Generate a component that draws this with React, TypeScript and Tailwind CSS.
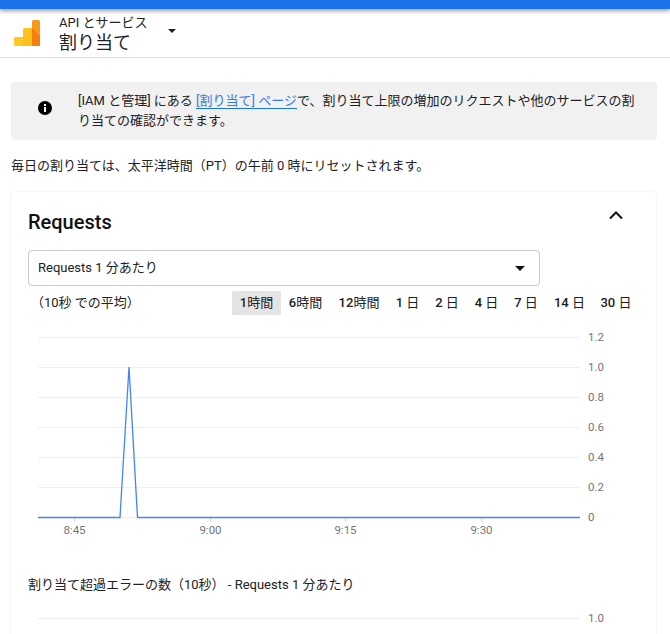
import React from "react";

const ranges = [
  { n: "1", u: "時間", w: "w-[49px]", a: true },
  { n: "6", u: "時間", w: "w-[49px]" },
  { n: "12", u: "時間", w: "w-[58px]" },
  { n: "1 ", u: "日", w: "w-[39px]" },
  { n: "2 ", u: "日", w: "w-[40px]" },
  { n: "4 ", u: "日", w: "w-[39px]" },
  { n: "7 ", u: "日", w: "w-[40px]" },
  { n: "14 ", u: "日", w: "w-[47px]" },
  { n: "30 ", u: "日", w: "w-[46px]" },
];

const ys: [number, string][] = [
  [337, "1.2"],
  [367, "1.0"],
  [397, "0.8"],
  [427, "0.6"],
  [457, "0.4"],
  [487, "0.2"],
  [517, "0"],
];
const xs: [number, string][] = [
  [74, "8:45"],
  [210, "9:00"],
  [345, "9:15"],
  [481, "9:30"],
];

export default function App() {
  return (
    <div className="relative h-[634px] w-[670px] overflow-hidden bg-white text-[13px] text-[#202124] font-['Roboto','Noto_Sans_CJK_JP',sans-serif]">
      <div className="relative z-10 h-[9px] bg-[#1a73e8] shadow-[0_2px_4px_rgba(0,0,0,0.4)]" />
      <header className="flex h-[49px] items-center border-b border-[#dfe0e1] pl-[14px]">
        <svg width="26" height="26" viewBox="0 0 26 26" className="shrink-0">
          <path d="M0 18.500A1.500 1.500 0 0 1 1.500 17H9v9H1.500A1.500 1.500 0 0 1 0 24.500z" fill="#ffc824" />
          <path d="M9 9.500A1.500 1.500 0 0 1 10.500 8H18v18H9z" fill="#ffbf1c" />
          <path d="M18 1.500A1.500 1.500 0 0 1 19.500 0h5A1.500 1.500 0 0 1 26 1.500V24.500A1.500 1.500 0 0 1 24.500 26H18z" fill="#f9981f" />
          <path d="M18 8l8 8v8.500A1.500 1.500 0 0 1 24.500 26H18z" fill="#f57f0c" />
        </svg>
        <div className="ml-[19px] mt-[3px] flex flex-col">
          <span className="text-[13px] leading-[16px]">API とサービス</span>
          <span className="text-[18px] leading-[23px]">割り当て</span>
        </div>
        <svg width="8" height="4" viewBox="0 0 8 4" className="ml-[21px] mb-[5px]">
          <path d="M0 0h8L4 4z" fill="#202124" />
        </svg>
      </header>

      <main className="px-[11px]">
        <div className="mt-[24px] flex h-[58px] w-[646px] rounded-[4px] bg-[#f1f1f1]">
          <div className="flex w-[67px] shrink-0 items-center justify-center pb-[6px]">
            <svg width="16" height="16" viewBox="0 0 16 16">
              <circle cx="8" cy="8" r="7" fill="#000" />
              <rect x="7" y="7" width="2" height="5" fill="#fff" />
              <rect x="7" y="4" width="2" height="2" fill="#fff" />
            </svg>
          </div>
          <p className="pt-[9px] pr-[20px] leading-[20px]">
            [IAM と管理] にある <a className="border-b border-[#1a73e8] text-[#3b78e7]">[割り当て] ページ</a>で、割り当て上限の増加のリクエストや他のサービスの割り当ての確認ができます。
          </p>
        </div>

        <p className="mt-[16px] leading-[20px]">毎日の割り当ては、太平洋時間（PT）の午前 0 時にリセットされます。</p>

        <section className="mt-[16px] h-[500px] w-[645px] rounded-[4px] shadow-[0_0_2px_rgba(60,64,67,0.16)]">
          <div className="flex items-center justify-between pl-[17px] pr-[32px] pt-[14px]">
            <h2 className="text-[20px] font-medium leading-[32px] text-[#111]">Requests</h2>
            <svg width="16" height="10" viewBox="0 0 16 10" className="mb-[14px]">
              <path d="M2 8.500L8 2.500l6 6" fill="none" stroke="#111" strokeWidth="2" />
            </svg>
          </div>
          <div className="ml-[17px] mt-[12px] flex h-[36px] w-[512px] items-center justify-between rounded-[4px] border border-[#c8c8c8] pl-[9px] pr-[14px]">
            <span>Requests 1 分あたり</span>
            <svg width="10" height="5" viewBox="0 0 10 5">
              <path d="M0 0h10L5 5z" fill="#111" />
            </svg>
          </div>
          <div className="mt-[5px] flex h-[24px] items-center pl-[20px]">
            <span>（10秒 での平均）</span>
            <div className="ml-auto mr-[17px] flex">
              {ranges.map((r) => (
                <span
                  key={r.n + r.u}
                  className={`flex h-[24px] items-center justify-center whitespace-pre rounded-[1px] ${r.w} ${r.a ? "bg-[#e4e4e4]" : ""}`}
                >
                  <span className="font-medium">{r.n}</span>
                  {r.u}
                </span>
              ))}
            </div>
          </div>
          <svg width="645" height="217" viewBox="11 327 645 217" className="mt-[12px] block">
            {ys.map(([y, t]) => (
              <g key={t}>
                <line x1="38" x2="580" y1={y + 0.5} y2={y + 0.5} stroke="#efefef" />
                <text x="588" y={y + 3.500} fontSize="11.500" fill="#757575">{t}</text>
              </g>
            ))}
            {xs.map(([x, t]) => (
              <g key={t}>
                <line x1={x + 0.5} x2={x + 0.5} y1="517" y2="522" stroke="#d8d8d8" />
                <text x={x + 0.5} y="534" textAnchor="middle" fontSize="11.500" fill="#757575">{t}</text>
              </g>
            ))}
            <polyline points="38,517.500 120,517.500 129,367 137.500,517.500 580,517.500" fill="none" stroke="#4285f4" strokeWidth="1.300" />
          </svg>
          <p className="ml-[17px] mt-[31px] leading-[20px]">割り当て超過エラーの数（10秒） - Requests 1 分あたり</p>
          <svg width="645" height="20" viewBox="11 607 645 20" className="mt-[13px] block">
            <line x1="38" x2="580" y1="617.500" y2="617.500" stroke="#efefef" />
            <text x="588" y="620.500" fontSize="11.500" fill="#757575">1.0</text>
          </svg>
        </section>
      </main>
    </div>
  );
}
